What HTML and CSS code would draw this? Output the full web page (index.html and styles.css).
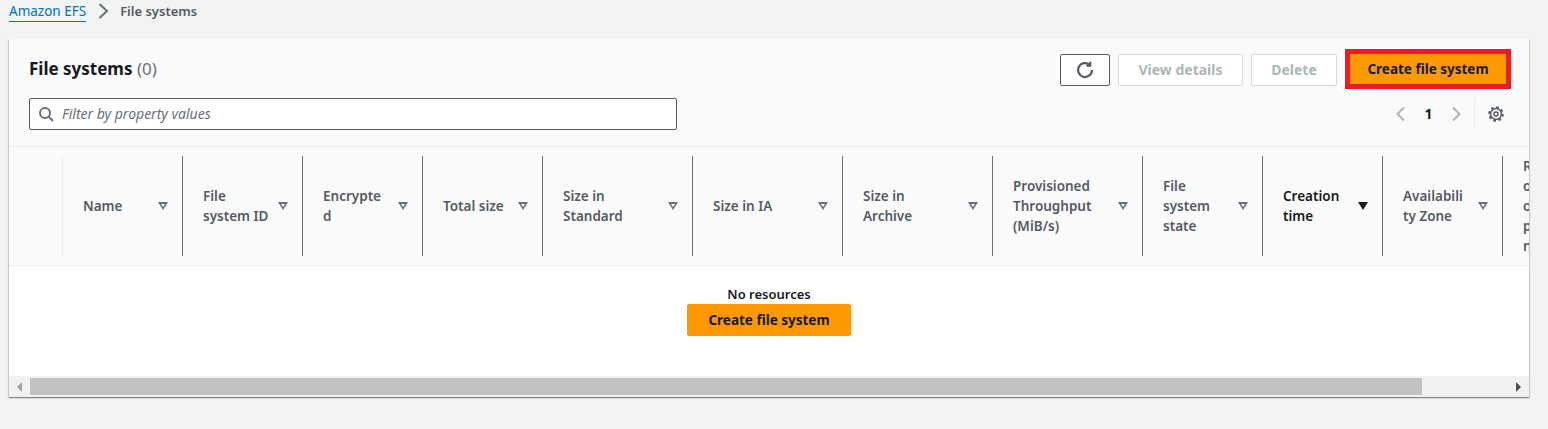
FILE: index.html
```html
<!DOCTYPE html>
<html>
  <head>
    <meta charset="UTF-8" />
    <title>File systems</title>
    <link rel="stylesheet" href="styles.css">
  </head>
  <body>
    <nav class="crumbs">
      <a href="#">Amazon EFS</a>
      <svg class="crumb-sep" width="16" height="16" viewBox="0 0 16 16"><path d="M4.500 1 12 8 4.500 15" /></svg>
      <span>File systems</span>
    </nav>

    <section class="card">
      <header class="card-head">
        <div class="head-top">
          <h1>File systems <span class="count">(0)</span></h1>
          <div class="actions">
            <button class="btn btn-icon">
              <svg width="18" height="18" viewBox="0 0 16 16"><path d="M14.200 8A6.200 6.200 0 1 1 11.900 3.200" /><path d="M12.600 0.600V4H9.200" /></svg>
            </button>
            <button class="btn btn-off btn-view">View details</button>
            <button class="btn btn-off btn-delete">Delete</button>
            <span class="highlight"><button class="btn btn-primary btn-create">Create file system</button></span>
          </div>
        </div>
        <div class="head-bottom">
          <div class="filter">
            <svg width="16" height="16" viewBox="0 0 16 16"><circle cx="7" cy="7" r="5" /><path d="M10.700 10.700 15 15" /></svg>
            <span>Filter by property values</span>
          </div>
          <div class="pager">
            <svg class="arrow" width="16" height="16" viewBox="0 0 16 16"><path d="M11 1.500 4.500 8 11 14.500" /></svg>
            <span class="page-no">1</span>
            <svg class="arrow" width="16" height="16" viewBox="0 0 16 16"><path d="M5 1.500 11.500 8 5 14.500" /></svg>
            <span class="pager-sep"></span>
            <svg class="gear" width="18" height="18" viewBox="0 0 18 18"><circle cx="9" cy="9" r="2" /><circle cx="9" cy="9" r="5.400" /><circle class="gear-teeth" cx="9" cy="9" r="6.800" /></svg>
          </div>
        </div>
      </header>

      <div class="thead">
        <div class="th th-check"></div>
        <div class="th th-first"><span class="th-text">Name</span><i class="sort"></i></div>
        <div class="th"><span class="th-text">File<br>system ID</span><i class="sort"></i></div>
        <div class="th"><span class="th-text">Encrypte<br>d</span><i class="sort"></i></div>
        <div class="th"><span class="th-text">Total size</span><i class="sort"></i></div>
        <div class="th th-wide"><span class="th-text">Size in<br>Standard</span><i class="sort"></i></div>
        <div class="th th-wide"><span class="th-text">Size in IA</span><i class="sort"></i></div>
        <div class="th th-wide"><span class="th-text">Size in<br>Archive</span><i class="sort"></i></div>
        <div class="th th-wide"><span class="th-text">Provisioned<br>Throughput<br>(MiB/s)</span><i class="sort"></i></div>
        <div class="th"><span class="th-text">File<br>system<br>state</span><i class="sort"></i></div>
        <div class="th th-active"><span class="th-text">Creation<br>time</span><i class="sort"></i></div>
        <div class="th"><span class="th-text">Availabili<br>ty Zone</span><i class="sort"></i></div>
        <div class="th"><span class="th-text">Replicati<br>on<br>overwrite<br>protectio<br>n</span></div>
      </div>

      <div class="empty">
        <strong>No resources</strong>
        <button class="btn btn-primary btn-empty">Create file system</button>
      </div>

      <div class="scrollbar">
        <i class="tri tri-left"></i>
        <div class="track"><div class="thumb"></div></div>
        <i class="tri tri-right"></i>
      </div>
    </section>
  </body>
</html>
```

FILE: styles.css
```css
html, body {
  margin: 0;
  padding: 0;
  height: 100%;
}

body {
  background: #f2f3f3;
  color: #16191f;
  font-family: "Noto Sans", Arial, sans-serif;
  font-size: 14px;
  line-height: 20px;
  overflow: hidden;
}

svg {
  fill: none;
  stroke-width: 2;
  flex-shrink: 0;
}

/* Breadcrumbs */
.crumbs {
  display: flex;
  align-items: center;
  gap: 8px;
  height: 22px;
  padding-left: 9px;
  font-size: 13.5px;
}

.crumbs a {
  color: #0073bb;
  text-decoration: none;
  border-bottom: 1px solid #0073bb;
  line-height: 20px;
}

.crumbs span {
  color: #545b64;
  font-size: 13px;
  font-weight: 600;
  margin-left: 1px;
}

.crumb-sep {
  stroke: #687078;
  margin: -1px 0 0 1px;
}

/* Card */
.card {
  margin: 17px 0 0 9px;
  width: 1520px;
  height: 358px;
  background: #fff;
  box-shadow: 0 1px 1px 0 rgba(0, 28, 36, 0.3), 1px 1px 1px 0 rgba(0, 28, 36, 0.15), -1px 1px 1px 0 rgba(0, 28, 36, 0.15);
  display: flex;
  flex-direction: column;
  overflow: hidden;
}

.card-head {
  height: 108px;
  box-sizing: border-box;
  flex-shrink: 0;
  background: #fafafa;
  border-bottom: 1px solid #eaeded;
  padding: 10px 18px 0 20px;
}

.head-top {
  display: flex;
  justify-content: space-between;
  align-items: flex-start;
  height: 49px;
}

h1 {
  margin: 0;
  padding-top: 9px;
  font-size: 17px;
  line-height: 22px;
  font-weight: 700;
}

.count {
  color: #687078;
  font-weight: 400;
}

.actions {
  display: flex;
  align-items: flex-start;
  gap: 8px;
}

.btn {
  height: 32px;
  box-sizing: border-box;
  border-radius: 2px;
  font-family: inherit;
  font-size: 14px;
  font-weight: 700;
  line-height: 20px;
  padding: 0;
  background: #fff;
}

.btn-icon {
  width: 50px;
  margin-top: 5px;
  border: 1px solid #545b64;
  display: flex;
  align-items: center;
  justify-content: center;
}

.btn-icon svg {
  stroke: #545b64;
}

.btn-off {
  margin-top: 5px;
  border: 1px solid #d5dbdb;
  color: #aab7b8;
}

.btn-view { width: 125px; }
.btn-delete { width: 86px; }

.btn-primary {
  background: #ff9900;
  border: 1px solid #ff9900;
  color: #16191f;
  font-size: 13.5px;
}

.highlight {
  display: block;
  border: 5px solid #ed1c24;
  height: 40px;
  box-sizing: border-box;
}

.btn-create {
  display: block;
  width: 156px;
  height: 30px;
  border-radius: 0;
}

.head-bottom {
  display: flex;
  justify-content: space-between;
  align-items: center;
}

.filter {
  width: 648px;
  height: 32px;
  box-sizing: border-box;
  background: #fff;
  border: 1px solid #545b64;
  border-radius: 2px;
  display: flex;
  align-items: center;
  gap: 8px;
  padding-left: 8px;
  color: #687078;
  font-style: italic;
}

.filter svg {
  stroke: #687078;
}

.pager {
  display: flex;
  align-items: center;
  height: 32px;
  margin-right: 6px;
}

.arrow {
  stroke: #aab7b8;
}

.page-no {
  width: 39px;
  text-align: center;
  font-weight: 700;
}

.pager-sep {
  width: 1px;
  height: 32px;
  background: #eaeded;
  margin: 0 12px 0 10px;
}

.gear {
  stroke: #545b64;
  stroke-width: 1.500;
}

.gear-teeth {
  stroke-width: 2;
  stroke-dasharray: 2.670 2.670;
}

/* Table header */
.thead {
  display: flex;
  flex-shrink: 0;
  height: 119px;
  box-sizing: border-box;
  background: #fafafa;
  border-bottom: 1px solid #eaeded;
  padding: 9px 0;
  overflow: hidden;
  font-size: 13.5px;
}

.th {
  flex: 0 0 120px;
  box-sizing: border-box;
  display: flex;
  align-items: center;
  justify-content: space-between;
  padding: 0 14px 0 20px;
  border-left: 1px solid #687078;
  color: #545b64;
  font-weight: 600;
}

.th-check {
  flex-basis: 53px;
  border-left: 0;
}

.th-first {
  border-left-color: #eaeded;
}

.th-wide { flex-basis: 150px; }

.th-active {
  color: #16191f;
}

.sort {
  width: 0;
  height: 0;
  border-style: solid;
  border-width: 8px 5px 0 5px;
  border-color: #687078 transparent transparent;
  position: relative;
  margin-bottom: 1px;
}

/* inner cut out of the outlined sort triangle */
.sort::after {
  content: "";
  position: absolute;
  left: -2px;
  top: -6px;
  border-style: solid;
  border-width: 3px 2px 0 2px;
  border-color: #fafafa transparent transparent;
}

.th-active .sort {
  border-top-color: #16191f;
}

.th-active .sort::after {
  display: none;
}

/* Empty state */
.empty {
  flex: 1;
  display: flex;
  flex-direction: column;
  align-items: center;
  padding-top: 18px;
  font-size: 13px;
}

.empty strong {
  font-weight: 600;
  line-height: 20px;
}

.btn-empty {
  width: 164px;
}

/* Scrollbar */
.scrollbar {
  flex-shrink: 0;
  height: 21px;
  background: #f1f1f1;
  display: flex;
  align-items: center;
}

.track {
  flex: 1;
  height: 17px;
}

.thumb {
  width: 1392px;
  height: 100%;
  background: #c1c1c1;
}

.tri {
  width: 0;
  height: 0;
  border-style: solid;
  border-width: 5px 0;
  margin: 0 8px;
}

.tri-left {
  border-right: 5px solid #a3a3a3;
  border-left: 0;
  border-top-color: transparent;
  border-bottom-color: transparent;
}

.tri-right {
  border-left: 5px solid #505050;
  border-right: 0;
  border-top-color: transparent;
  border-bottom-color: transparent;
}
```
